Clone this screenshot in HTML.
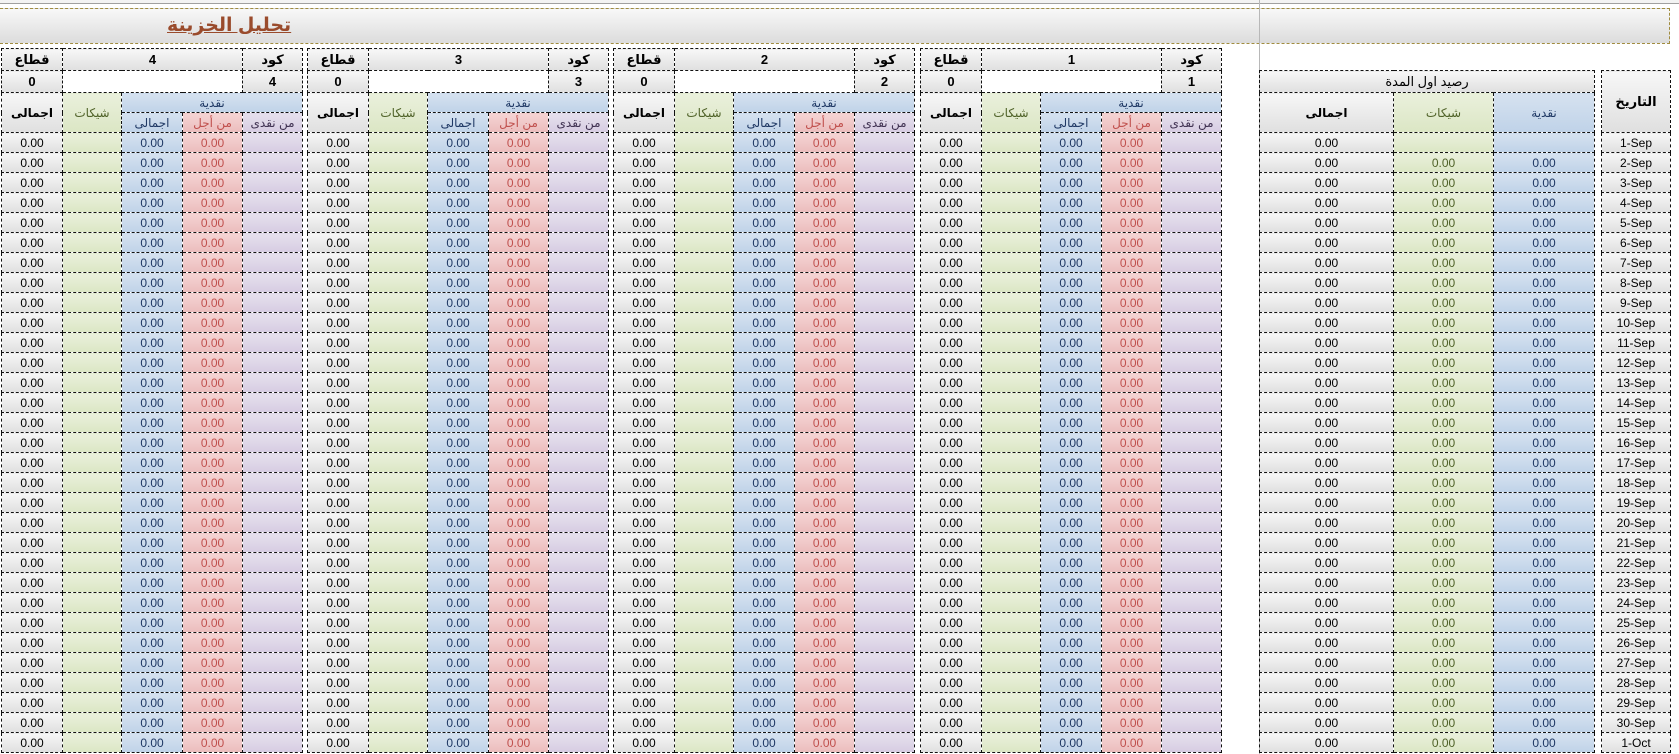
<!DOCTYPE html>
<html><head><meta charset="utf-8"><style>
body{margin:0;width:1679px;height:754px;position:relative;background:#fff;overflow:hidden;font-family:"Liberation Sans","DejaVu Sans",sans-serif;}
.top{position:absolute;left:0;top:0;width:1679px;height:3px;border-bottom:1px solid #a0a0a0;background:#f3f3f3}
.title{position:absolute;left:0;top:8px;width:1669px;height:34px;border:1px dashed #a08c40;border-left:none;background:linear-gradient(#f8f8f8,#dcdcdc)}
.title span{position:absolute;left:167px;top:5px;font-size:19px;font-weight:bold;color:#9a4b2c;text-decoration:underline;font-family:"Liberation Sans","DejaVu Sans",sans-serif}
.vl{position:absolute;left:1259px;top:0;width:1px;height:754px;background:#b8b8b8}
table{position:absolute;border-collapse:collapse;table-layout:fixed;font-size:12px}
td{border:1px dashed #111;padding:0;text-align:center;height:19px;overflow:hidden;white-space:nowrap;font-family:"Liberation Sans","DejaVu Sans",sans-serif}
.g{background:linear-gradient(#f7f7f7,#dfdfdf);color:#000}
.n{background:linear-gradient(#eaf0dc,#dbe6c4);color:#4f6228}
.b{background:linear-gradient(#d6e2f0,#bfd2e8);color:#1f3864}
.r{background:linear-gradient(#f5d4d4,#ebbcbc);color:#c0504d}
.p{background:linear-gradient(#e6e0ed,#d6cce2);color:#3f3151}
.w{background:#fff}
.h td{font-weight:bold;font-size:13px}
</style></head><body>
<div class="top"></div>
<div class="title"><span>تحليل الخزينة</span></div>
<div class="vl"></div>

<table style="left:1px;top:48px;width:301px"><colgroup><col style="width:61px"><col style="width:59px"><col style="width:61px"><col style="width:60px"><col style="width:60px"></colgroup>
<tr class="h"><td class="g" style="height:21px">قطاع</td><td class="g" colspan="3">4</td><td class="g">كود</td></tr>
<tr class="h"><td class="g" style="height:21px">0</td><td class="w" colspan="3"></td><td class="g">4</td></tr>
<tr><td class="g" rowspan="2" style="font-weight:bold">اجمالى</td><td class="n" rowspan="2">شيكات</td><td class="b" colspan="3">نقدية</td></tr>
<tr><td class="b">اجمالى</td><td class="r">من أجل</td><td class="p">من نقدى</td></tr>
<tbody>
<tr><td class="g">0.00</td><td class="n"></td><td class="b">0.00</td><td class="r">0.00</td><td class="p"></td></tr>
<tr><td class="g">0.00</td><td class="n"></td><td class="b">0.00</td><td class="r">0.00</td><td class="p"></td></tr>
<tr><td class="g">0.00</td><td class="n"></td><td class="b">0.00</td><td class="r">0.00</td><td class="p"></td></tr>
<tr><td class="g">0.00</td><td class="n"></td><td class="b">0.00</td><td class="r">0.00</td><td class="p"></td></tr>
<tr><td class="g">0.00</td><td class="n"></td><td class="b">0.00</td><td class="r">0.00</td><td class="p"></td></tr>
<tr><td class="g">0.00</td><td class="n"></td><td class="b">0.00</td><td class="r">0.00</td><td class="p"></td></tr>
<tr><td class="g">0.00</td><td class="n"></td><td class="b">0.00</td><td class="r">0.00</td><td class="p"></td></tr>
<tr><td class="g">0.00</td><td class="n"></td><td class="b">0.00</td><td class="r">0.00</td><td class="p"></td></tr>
<tr><td class="g">0.00</td><td class="n"></td><td class="b">0.00</td><td class="r">0.00</td><td class="p"></td></tr>
<tr><td class="g">0.00</td><td class="n"></td><td class="b">0.00</td><td class="r">0.00</td><td class="p"></td></tr>
<tr><td class="g">0.00</td><td class="n"></td><td class="b">0.00</td><td class="r">0.00</td><td class="p"></td></tr>
<tr><td class="g">0.00</td><td class="n"></td><td class="b">0.00</td><td class="r">0.00</td><td class="p"></td></tr>
<tr><td class="g">0.00</td><td class="n"></td><td class="b">0.00</td><td class="r">0.00</td><td class="p"></td></tr>
<tr><td class="g">0.00</td><td class="n"></td><td class="b">0.00</td><td class="r">0.00</td><td class="p"></td></tr>
<tr><td class="g">0.00</td><td class="n"></td><td class="b">0.00</td><td class="r">0.00</td><td class="p"></td></tr>
<tr><td class="g">0.00</td><td class="n"></td><td class="b">0.00</td><td class="r">0.00</td><td class="p"></td></tr>
<tr><td class="g">0.00</td><td class="n"></td><td class="b">0.00</td><td class="r">0.00</td><td class="p"></td></tr>
<tr><td class="g">0.00</td><td class="n"></td><td class="b">0.00</td><td class="r">0.00</td><td class="p"></td></tr>
<tr><td class="g">0.00</td><td class="n"></td><td class="b">0.00</td><td class="r">0.00</td><td class="p"></td></tr>
<tr><td class="g">0.00</td><td class="n"></td><td class="b">0.00</td><td class="r">0.00</td><td class="p"></td></tr>
<tr><td class="g">0.00</td><td class="n"></td><td class="b">0.00</td><td class="r">0.00</td><td class="p"></td></tr>
<tr><td class="g">0.00</td><td class="n"></td><td class="b">0.00</td><td class="r">0.00</td><td class="p"></td></tr>
<tr><td class="g">0.00</td><td class="n"></td><td class="b">0.00</td><td class="r">0.00</td><td class="p"></td></tr>
<tr><td class="g">0.00</td><td class="n"></td><td class="b">0.00</td><td class="r">0.00</td><td class="p"></td></tr>
<tr><td class="g">0.00</td><td class="n"></td><td class="b">0.00</td><td class="r">0.00</td><td class="p"></td></tr>
<tr><td class="g">0.00</td><td class="n"></td><td class="b">0.00</td><td class="r">0.00</td><td class="p"></td></tr>
<tr><td class="g">0.00</td><td class="n"></td><td class="b">0.00</td><td class="r">0.00</td><td class="p"></td></tr>
<tr><td class="g">0.00</td><td class="n"></td><td class="b">0.00</td><td class="r">0.00</td><td class="p"></td></tr>
<tr><td class="g">0.00</td><td class="n"></td><td class="b">0.00</td><td class="r">0.00</td><td class="p"></td></tr>
<tr><td class="g">0.00</td><td class="n"></td><td class="b">0.00</td><td class="r">0.00</td><td class="p"></td></tr>
<tr><td class="g">0.00</td><td class="n"></td><td class="b">0.00</td><td class="r">0.00</td><td class="p"></td></tr>
</tbody></table>

<table style="left:307px;top:48px;width:301px"><colgroup><col style="width:61px"><col style="width:59px"><col style="width:61px"><col style="width:60px"><col style="width:60px"></colgroup>
<tr class="h"><td class="g" style="height:21px">قطاع</td><td class="g" colspan="3">3</td><td class="g">كود</td></tr>
<tr class="h"><td class="g" style="height:21px">0</td><td class="w" colspan="3"></td><td class="g">3</td></tr>
<tr><td class="g" rowspan="2" style="font-weight:bold">اجمالى</td><td class="n" rowspan="2">شيكات</td><td class="b" colspan="3">نقدية</td></tr>
<tr><td class="b">اجمالى</td><td class="r">من أجل</td><td class="p">من نقدى</td></tr>
<tbody>
<tr><td class="g">0.00</td><td class="n"></td><td class="b">0.00</td><td class="r">0.00</td><td class="p"></td></tr>
<tr><td class="g">0.00</td><td class="n"></td><td class="b">0.00</td><td class="r">0.00</td><td class="p"></td></tr>
<tr><td class="g">0.00</td><td class="n"></td><td class="b">0.00</td><td class="r">0.00</td><td class="p"></td></tr>
<tr><td class="g">0.00</td><td class="n"></td><td class="b">0.00</td><td class="r">0.00</td><td class="p"></td></tr>
<tr><td class="g">0.00</td><td class="n"></td><td class="b">0.00</td><td class="r">0.00</td><td class="p"></td></tr>
<tr><td class="g">0.00</td><td class="n"></td><td class="b">0.00</td><td class="r">0.00</td><td class="p"></td></tr>
<tr><td class="g">0.00</td><td class="n"></td><td class="b">0.00</td><td class="r">0.00</td><td class="p"></td></tr>
<tr><td class="g">0.00</td><td class="n"></td><td class="b">0.00</td><td class="r">0.00</td><td class="p"></td></tr>
<tr><td class="g">0.00</td><td class="n"></td><td class="b">0.00</td><td class="r">0.00</td><td class="p"></td></tr>
<tr><td class="g">0.00</td><td class="n"></td><td class="b">0.00</td><td class="r">0.00</td><td class="p"></td></tr>
<tr><td class="g">0.00</td><td class="n"></td><td class="b">0.00</td><td class="r">0.00</td><td class="p"></td></tr>
<tr><td class="g">0.00</td><td class="n"></td><td class="b">0.00</td><td class="r">0.00</td><td class="p"></td></tr>
<tr><td class="g">0.00</td><td class="n"></td><td class="b">0.00</td><td class="r">0.00</td><td class="p"></td></tr>
<tr><td class="g">0.00</td><td class="n"></td><td class="b">0.00</td><td class="r">0.00</td><td class="p"></td></tr>
<tr><td class="g">0.00</td><td class="n"></td><td class="b">0.00</td><td class="r">0.00</td><td class="p"></td></tr>
<tr><td class="g">0.00</td><td class="n"></td><td class="b">0.00</td><td class="r">0.00</td><td class="p"></td></tr>
<tr><td class="g">0.00</td><td class="n"></td><td class="b">0.00</td><td class="r">0.00</td><td class="p"></td></tr>
<tr><td class="g">0.00</td><td class="n"></td><td class="b">0.00</td><td class="r">0.00</td><td class="p"></td></tr>
<tr><td class="g">0.00</td><td class="n"></td><td class="b">0.00</td><td class="r">0.00</td><td class="p"></td></tr>
<tr><td class="g">0.00</td><td class="n"></td><td class="b">0.00</td><td class="r">0.00</td><td class="p"></td></tr>
<tr><td class="g">0.00</td><td class="n"></td><td class="b">0.00</td><td class="r">0.00</td><td class="p"></td></tr>
<tr><td class="g">0.00</td><td class="n"></td><td class="b">0.00</td><td class="r">0.00</td><td class="p"></td></tr>
<tr><td class="g">0.00</td><td class="n"></td><td class="b">0.00</td><td class="r">0.00</td><td class="p"></td></tr>
<tr><td class="g">0.00</td><td class="n"></td><td class="b">0.00</td><td class="r">0.00</td><td class="p"></td></tr>
<tr><td class="g">0.00</td><td class="n"></td><td class="b">0.00</td><td class="r">0.00</td><td class="p"></td></tr>
<tr><td class="g">0.00</td><td class="n"></td><td class="b">0.00</td><td class="r">0.00</td><td class="p"></td></tr>
<tr><td class="g">0.00</td><td class="n"></td><td class="b">0.00</td><td class="r">0.00</td><td class="p"></td></tr>
<tr><td class="g">0.00</td><td class="n"></td><td class="b">0.00</td><td class="r">0.00</td><td class="p"></td></tr>
<tr><td class="g">0.00</td><td class="n"></td><td class="b">0.00</td><td class="r">0.00</td><td class="p"></td></tr>
<tr><td class="g">0.00</td><td class="n"></td><td class="b">0.00</td><td class="r">0.00</td><td class="p"></td></tr>
<tr><td class="g">0.00</td><td class="n"></td><td class="b">0.00</td><td class="r">0.00</td><td class="p"></td></tr>
</tbody></table>

<table style="left:613px;top:48px;width:301px"><colgroup><col style="width:61px"><col style="width:59px"><col style="width:61px"><col style="width:60px"><col style="width:60px"></colgroup>
<tr class="h"><td class="g" style="height:21px">قطاع</td><td class="g" colspan="3">2</td><td class="g">كود</td></tr>
<tr class="h"><td class="g" style="height:21px">0</td><td class="w" colspan="3"></td><td class="g">2</td></tr>
<tr><td class="g" rowspan="2" style="font-weight:bold">اجمالى</td><td class="n" rowspan="2">شيكات</td><td class="b" colspan="3">نقدية</td></tr>
<tr><td class="b">اجمالى</td><td class="r">من أجل</td><td class="p">من نقدى</td></tr>
<tbody>
<tr><td class="g">0.00</td><td class="n"></td><td class="b">0.00</td><td class="r">0.00</td><td class="p"></td></tr>
<tr><td class="g">0.00</td><td class="n"></td><td class="b">0.00</td><td class="r">0.00</td><td class="p"></td></tr>
<tr><td class="g">0.00</td><td class="n"></td><td class="b">0.00</td><td class="r">0.00</td><td class="p"></td></tr>
<tr><td class="g">0.00</td><td class="n"></td><td class="b">0.00</td><td class="r">0.00</td><td class="p"></td></tr>
<tr><td class="g">0.00</td><td class="n"></td><td class="b">0.00</td><td class="r">0.00</td><td class="p"></td></tr>
<tr><td class="g">0.00</td><td class="n"></td><td class="b">0.00</td><td class="r">0.00</td><td class="p"></td></tr>
<tr><td class="g">0.00</td><td class="n"></td><td class="b">0.00</td><td class="r">0.00</td><td class="p"></td></tr>
<tr><td class="g">0.00</td><td class="n"></td><td class="b">0.00</td><td class="r">0.00</td><td class="p"></td></tr>
<tr><td class="g">0.00</td><td class="n"></td><td class="b">0.00</td><td class="r">0.00</td><td class="p"></td></tr>
<tr><td class="g">0.00</td><td class="n"></td><td class="b">0.00</td><td class="r">0.00</td><td class="p"></td></tr>
<tr><td class="g">0.00</td><td class="n"></td><td class="b">0.00</td><td class="r">0.00</td><td class="p"></td></tr>
<tr><td class="g">0.00</td><td class="n"></td><td class="b">0.00</td><td class="r">0.00</td><td class="p"></td></tr>
<tr><td class="g">0.00</td><td class="n"></td><td class="b">0.00</td><td class="r">0.00</td><td class="p"></td></tr>
<tr><td class="g">0.00</td><td class="n"></td><td class="b">0.00</td><td class="r">0.00</td><td class="p"></td></tr>
<tr><td class="g">0.00</td><td class="n"></td><td class="b">0.00</td><td class="r">0.00</td><td class="p"></td></tr>
<tr><td class="g">0.00</td><td class="n"></td><td class="b">0.00</td><td class="r">0.00</td><td class="p"></td></tr>
<tr><td class="g">0.00</td><td class="n"></td><td class="b">0.00</td><td class="r">0.00</td><td class="p"></td></tr>
<tr><td class="g">0.00</td><td class="n"></td><td class="b">0.00</td><td class="r">0.00</td><td class="p"></td></tr>
<tr><td class="g">0.00</td><td class="n"></td><td class="b">0.00</td><td class="r">0.00</td><td class="p"></td></tr>
<tr><td class="g">0.00</td><td class="n"></td><td class="b">0.00</td><td class="r">0.00</td><td class="p"></td></tr>
<tr><td class="g">0.00</td><td class="n"></td><td class="b">0.00</td><td class="r">0.00</td><td class="p"></td></tr>
<tr><td class="g">0.00</td><td class="n"></td><td class="b">0.00</td><td class="r">0.00</td><td class="p"></td></tr>
<tr><td class="g">0.00</td><td class="n"></td><td class="b">0.00</td><td class="r">0.00</td><td class="p"></td></tr>
<tr><td class="g">0.00</td><td class="n"></td><td class="b">0.00</td><td class="r">0.00</td><td class="p"></td></tr>
<tr><td class="g">0.00</td><td class="n"></td><td class="b">0.00</td><td class="r">0.00</td><td class="p"></td></tr>
<tr><td class="g">0.00</td><td class="n"></td><td class="b">0.00</td><td class="r">0.00</td><td class="p"></td></tr>
<tr><td class="g">0.00</td><td class="n"></td><td class="b">0.00</td><td class="r">0.00</td><td class="p"></td></tr>
<tr><td class="g">0.00</td><td class="n"></td><td class="b">0.00</td><td class="r">0.00</td><td class="p"></td></tr>
<tr><td class="g">0.00</td><td class="n"></td><td class="b">0.00</td><td class="r">0.00</td><td class="p"></td></tr>
<tr><td class="g">0.00</td><td class="n"></td><td class="b">0.00</td><td class="r">0.00</td><td class="p"></td></tr>
<tr><td class="g">0.00</td><td class="n"></td><td class="b">0.00</td><td class="r">0.00</td><td class="p"></td></tr>
</tbody></table>

<table style="left:920px;top:48px;width:301px"><colgroup><col style="width:61px"><col style="width:59px"><col style="width:61px"><col style="width:60px"><col style="width:60px"></colgroup>
<tr class="h"><td class="g" style="height:21px">قطاع</td><td class="g" colspan="3">1</td><td class="g">كود</td></tr>
<tr class="h"><td class="g" style="height:21px">0</td><td class="w" colspan="3"></td><td class="g">1</td></tr>
<tr><td class="g" rowspan="2" style="font-weight:bold">اجمالى</td><td class="n" rowspan="2">شيكات</td><td class="b" colspan="3">نقدية</td></tr>
<tr><td class="b">اجمالى</td><td class="r">من أجل</td><td class="p">من نقدى</td></tr>
<tbody>
<tr><td class="g">0.00</td><td class="n"></td><td class="b">0.00</td><td class="r">0.00</td><td class="p"></td></tr>
<tr><td class="g">0.00</td><td class="n"></td><td class="b">0.00</td><td class="r">0.00</td><td class="p"></td></tr>
<tr><td class="g">0.00</td><td class="n"></td><td class="b">0.00</td><td class="r">0.00</td><td class="p"></td></tr>
<tr><td class="g">0.00</td><td class="n"></td><td class="b">0.00</td><td class="r">0.00</td><td class="p"></td></tr>
<tr><td class="g">0.00</td><td class="n"></td><td class="b">0.00</td><td class="r">0.00</td><td class="p"></td></tr>
<tr><td class="g">0.00</td><td class="n"></td><td class="b">0.00</td><td class="r">0.00</td><td class="p"></td></tr>
<tr><td class="g">0.00</td><td class="n"></td><td class="b">0.00</td><td class="r">0.00</td><td class="p"></td></tr>
<tr><td class="g">0.00</td><td class="n"></td><td class="b">0.00</td><td class="r">0.00</td><td class="p"></td></tr>
<tr><td class="g">0.00</td><td class="n"></td><td class="b">0.00</td><td class="r">0.00</td><td class="p"></td></tr>
<tr><td class="g">0.00</td><td class="n"></td><td class="b">0.00</td><td class="r">0.00</td><td class="p"></td></tr>
<tr><td class="g">0.00</td><td class="n"></td><td class="b">0.00</td><td class="r">0.00</td><td class="p"></td></tr>
<tr><td class="g">0.00</td><td class="n"></td><td class="b">0.00</td><td class="r">0.00</td><td class="p"></td></tr>
<tr><td class="g">0.00</td><td class="n"></td><td class="b">0.00</td><td class="r">0.00</td><td class="p"></td></tr>
<tr><td class="g">0.00</td><td class="n"></td><td class="b">0.00</td><td class="r">0.00</td><td class="p"></td></tr>
<tr><td class="g">0.00</td><td class="n"></td><td class="b">0.00</td><td class="r">0.00</td><td class="p"></td></tr>
<tr><td class="g">0.00</td><td class="n"></td><td class="b">0.00</td><td class="r">0.00</td><td class="p"></td></tr>
<tr><td class="g">0.00</td><td class="n"></td><td class="b">0.00</td><td class="r">0.00</td><td class="p"></td></tr>
<tr><td class="g">0.00</td><td class="n"></td><td class="b">0.00</td><td class="r">0.00</td><td class="p"></td></tr>
<tr><td class="g">0.00</td><td class="n"></td><td class="b">0.00</td><td class="r">0.00</td><td class="p"></td></tr>
<tr><td class="g">0.00</td><td class="n"></td><td class="b">0.00</td><td class="r">0.00</td><td class="p"></td></tr>
<tr><td class="g">0.00</td><td class="n"></td><td class="b">0.00</td><td class="r">0.00</td><td class="p"></td></tr>
<tr><td class="g">0.00</td><td class="n"></td><td class="b">0.00</td><td class="r">0.00</td><td class="p"></td></tr>
<tr><td class="g">0.00</td><td class="n"></td><td class="b">0.00</td><td class="r">0.00</td><td class="p"></td></tr>
<tr><td class="g">0.00</td><td class="n"></td><td class="b">0.00</td><td class="r">0.00</td><td class="p"></td></tr>
<tr><td class="g">0.00</td><td class="n"></td><td class="b">0.00</td><td class="r">0.00</td><td class="p"></td></tr>
<tr><td class="g">0.00</td><td class="n"></td><td class="b">0.00</td><td class="r">0.00</td><td class="p"></td></tr>
<tr><td class="g">0.00</td><td class="n"></td><td class="b">0.00</td><td class="r">0.00</td><td class="p"></td></tr>
<tr><td class="g">0.00</td><td class="n"></td><td class="b">0.00</td><td class="r">0.00</td><td class="p"></td></tr>
<tr><td class="g">0.00</td><td class="n"></td><td class="b">0.00</td><td class="r">0.00</td><td class="p"></td></tr>
<tr><td class="g">0.00</td><td class="n"></td><td class="b">0.00</td><td class="r">0.00</td><td class="p"></td></tr>
<tr><td class="g">0.00</td><td class="n"></td><td class="b">0.00</td><td class="r">0.00</td><td class="p"></td></tr>
</tbody></table>

<table style="left:1259px;top:70px;width:335px"><colgroup><col style="width:134px"><col style="width:100px"><col style="width:101px"></colgroup>
<tr><td class="g" colspan="3" style="height:21px;font-size:13px">رصيد اول المدة</td></tr>
<tr><td class="g" style="height:39px;font-weight:bold">اجمالى</td><td class="n">شيكات</td><td class="b">نقدية</td></tr>
<tr><td class="g">0.00</td><td class="n"></td><td class="b"></td></tr>
<tr><td class="g">0.00</td><td class="n">0.00</td><td class="b">0.00</td></tr>
<tr><td class="g">0.00</td><td class="n">0.00</td><td class="b">0.00</td></tr>
<tr><td class="g">0.00</td><td class="n">0.00</td><td class="b">0.00</td></tr>
<tr><td class="g">0.00</td><td class="n">0.00</td><td class="b">0.00</td></tr>
<tr><td class="g">0.00</td><td class="n">0.00</td><td class="b">0.00</td></tr>
<tr><td class="g">0.00</td><td class="n">0.00</td><td class="b">0.00</td></tr>
<tr><td class="g">0.00</td><td class="n">0.00</td><td class="b">0.00</td></tr>
<tr><td class="g">0.00</td><td class="n">0.00</td><td class="b">0.00</td></tr>
<tr><td class="g">0.00</td><td class="n">0.00</td><td class="b">0.00</td></tr>
<tr><td class="g">0.00</td><td class="n">0.00</td><td class="b">0.00</td></tr>
<tr><td class="g">0.00</td><td class="n">0.00</td><td class="b">0.00</td></tr>
<tr><td class="g">0.00</td><td class="n">0.00</td><td class="b">0.00</td></tr>
<tr><td class="g">0.00</td><td class="n">0.00</td><td class="b">0.00</td></tr>
<tr><td class="g">0.00</td><td class="n">0.00</td><td class="b">0.00</td></tr>
<tr><td class="g">0.00</td><td class="n">0.00</td><td class="b">0.00</td></tr>
<tr><td class="g">0.00</td><td class="n">0.00</td><td class="b">0.00</td></tr>
<tr><td class="g">0.00</td><td class="n">0.00</td><td class="b">0.00</td></tr>
<tr><td class="g">0.00</td><td class="n">0.00</td><td class="b">0.00</td></tr>
<tr><td class="g">0.00</td><td class="n">0.00</td><td class="b">0.00</td></tr>
<tr><td class="g">0.00</td><td class="n">0.00</td><td class="b">0.00</td></tr>
<tr><td class="g">0.00</td><td class="n">0.00</td><td class="b">0.00</td></tr>
<tr><td class="g">0.00</td><td class="n">0.00</td><td class="b">0.00</td></tr>
<tr><td class="g">0.00</td><td class="n">0.00</td><td class="b">0.00</td></tr>
<tr><td class="g">0.00</td><td class="n">0.00</td><td class="b">0.00</td></tr>
<tr><td class="g">0.00</td><td class="n">0.00</td><td class="b">0.00</td></tr>
<tr><td class="g">0.00</td><td class="n">0.00</td><td class="b">0.00</td></tr>
<tr><td class="g">0.00</td><td class="n">0.00</td><td class="b">0.00</td></tr>
<tr><td class="g">0.00</td><td class="n">0.00</td><td class="b">0.00</td></tr>
<tr><td class="g">0.00</td><td class="n">0.00</td><td class="b">0.00</td></tr>
<tr><td class="g">0.00</td><td class="n">0.00</td><td class="b">0.00</td></tr>
</table>

<table style="left:1601px;top:70px;width:69px"><colgroup><col style="width:69px"></colgroup>
<tr><td class="g" style="height:61px;font-weight:bold;font-size:13px">التاريخ</td></tr>
<tr><td class="g">1-Sep</td></tr><tr><td class="g">2-Sep</td></tr><tr><td class="g">3-Sep</td></tr><tr><td class="g">4-Sep</td></tr><tr><td class="g">5-Sep</td></tr><tr><td class="g">6-Sep</td></tr><tr><td class="g">7-Sep</td></tr><tr><td class="g">8-Sep</td></tr><tr><td class="g">9-Sep</td></tr><tr><td class="g">10-Sep</td></tr><tr><td class="g">11-Sep</td></tr><tr><td class="g">12-Sep</td></tr><tr><td class="g">13-Sep</td></tr><tr><td class="g">14-Sep</td></tr><tr><td class="g">15-Sep</td></tr><tr><td class="g">16-Sep</td></tr><tr><td class="g">17-Sep</td></tr><tr><td class="g">18-Sep</td></tr><tr><td class="g">19-Sep</td></tr><tr><td class="g">20-Sep</td></tr><tr><td class="g">21-Sep</td></tr><tr><td class="g">22-Sep</td></tr><tr><td class="g">23-Sep</td></tr><tr><td class="g">24-Sep</td></tr><tr><td class="g">25-Sep</td></tr><tr><td class="g">26-Sep</td></tr><tr><td class="g">27-Sep</td></tr><tr><td class="g">28-Sep</td></tr><tr><td class="g">29-Sep</td></tr><tr><td class="g">30-Sep</td></tr><tr><td class="g">1-Oct</td></tr>
</table>
</body></html>
